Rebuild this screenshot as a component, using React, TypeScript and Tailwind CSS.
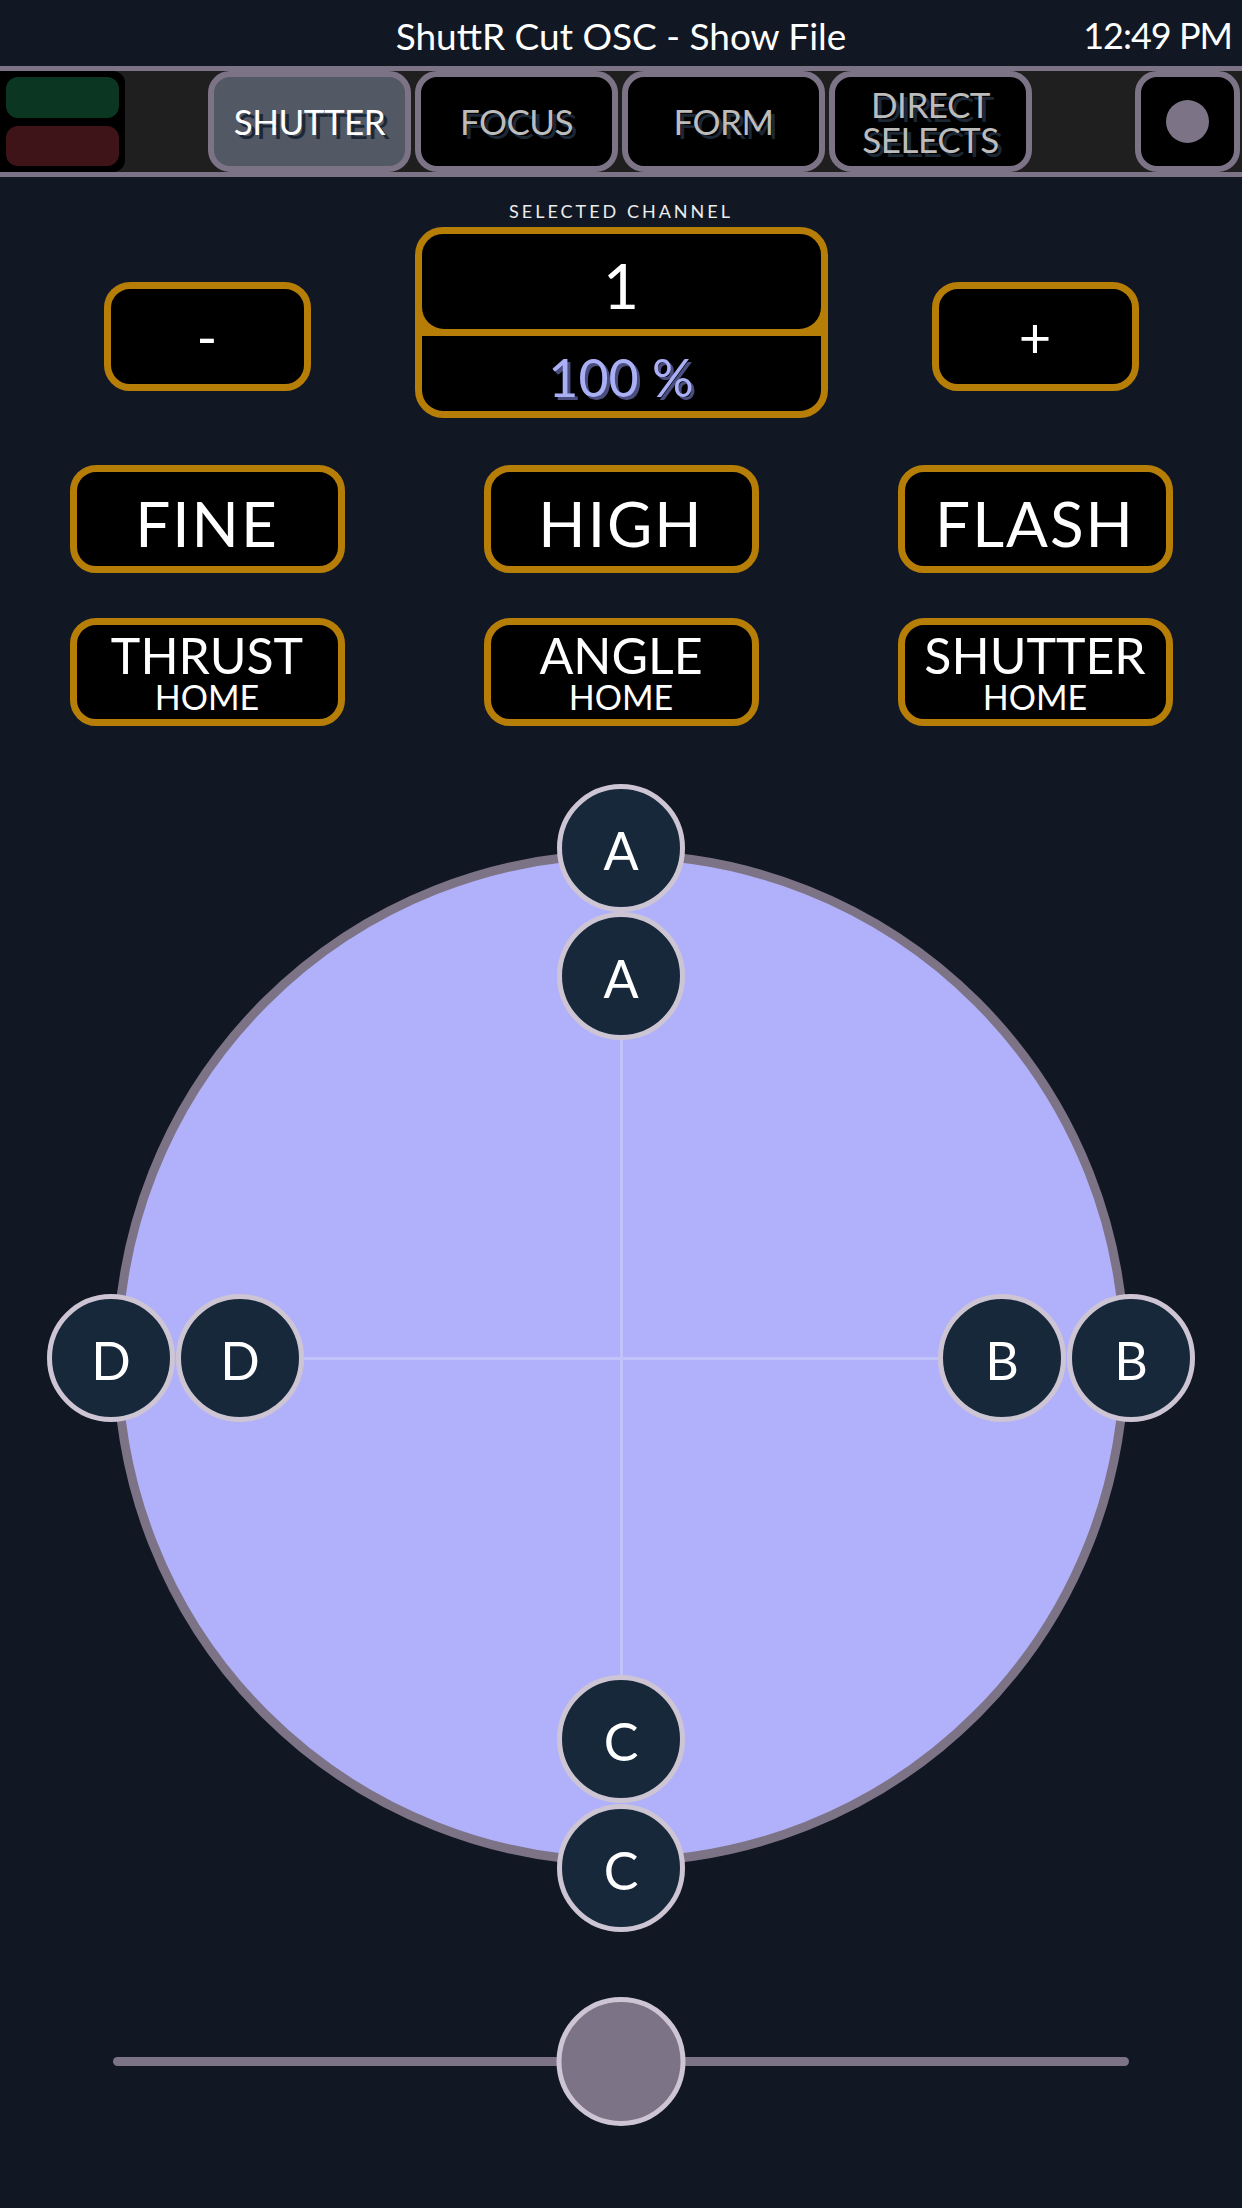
import React from 'react';

const handles = [
  { label: 'A', x: 499, y: -11 },
  { label: 'A', x: 499, y: 117 },
  { label: 'D', x: -11, y: 499 },
  { label: 'D', x: 118, y: 499 },
  { label: 'B', x: 880, y: 499 },
  { label: 'B', x: 1009, y: 499 },
  { label: 'C', x: 499, y: 880 },
  { label: 'C', x: 499, y: 1009 },
];

function Tab({ label, active }: { label: React.ReactNode; active?: boolean }) {
  return (
    <div
      className={`w-[203px] h-full rounded-[22px] border-[6px] border-[#7d7386] flex items-center justify-center text-center leading-[35px] text-[35px] tracking-[-0.5px] [text-shadow:4px_4px_0_#1c2836] ${
        active ? 'bg-[#525965] text-white' : 'bg-black text-[#bcbcbc]'
      }`}
    >
      {label}
    </div>
  );
}

function GoldButton({ top, bottom }: { top: string; bottom?: string }) {
  return (
    <div className="w-[275px] h-[108px] rounded-[26px] border-[7px] border-[#b67d07] bg-black flex flex-col items-center justify-center text-white">
      {bottom ? (
        <>
          <span className="text-[50px] leading-[50px]">{top}</span>
          <span className="text-[34px] leading-[34px]">{bottom}</span>
        </>
      ) : (
        <span className="text-[62px] leading-none tracking-[2px] pt-[8px]">{top}</span>
      )}
    </div>
  );
}

function StepButton({ sign }: { sign: string }) {
  return (
    <div className="mt-[81px] w-[207px] h-[109px] rounded-[26px] border-[7px] border-[#b67d07] bg-black flex items-center justify-center text-white text-[56px] leading-none">
      {sign}
    </div>
  );
}

export default function App() {
  return (
    <div className="min-h-screen bg-[#111824] text-white font-['Lato','Noto_Sans',sans-serif]">
      {/* Title bar */}
      <header className="h-[66px] grid grid-cols-[1fr_auto_1fr] items-center px-[10px]">
        <div />
        <h1 className="text-[37px] leading-none pt-[4px]">ShuttR Cut OSC - Show File</h1>
        <div className="justify-self-end text-[36px] leading-none pt-[4px] tracking-[-1px]">12:49 PM</div>
      </header>

      {/* Tab bar */}
      <nav className="h-[111px] border-y-[5px] border-[#7d7386] bg-[#1f1f1f] flex">
        <div className="w-[125px] h-full bg-black rounded-r-[12px] flex flex-col gap-[8px] p-[6px]">
          <div className="flex-1 rounded-[12px] bg-[#0a3622]" />
          <div className="flex-1 rounded-[12px] bg-[#3e1418]" />
        </div>
        <div className="ml-[83px] flex gap-[4px] h-full">
          <Tab label="SHUTTER" active />
          <Tab label="FOCUS" />
          <Tab label="FORM" />
          <Tab
            label={
              <span className="flex flex-col">
                <span>DIRECT</span>
                <span>SELECTS</span>
              </span>
            }
          />
        </div>
        <div className="ml-auto mr-[2px] w-[105px] h-full rounded-[22px] border-[6px] border-[#7d7386] bg-black flex items-center justify-center">
          <div className="w-[43px] h-[43px] rounded-full bg-[#7d7386]" />
        </div>
      </nav>

      {/* Channel controls */}
      <section className="grid grid-cols-3 justify-items-center items-start pt-[24px]">
        <StepButton sign="-" />
        <div className="flex flex-col items-center">
          <div className="text-[18px] leading-[20px] tracking-[3px] text-[#ececec]">SELECTED CHANNEL</div>
          <div className="mt-[6px] w-[413px] h-[191px] rounded-[28px] border-[7px] border-[#b67d07] bg-black overflow-hidden flex flex-col">
            <div className="bg-[#b67d07] pb-[7px]">
              <div className="h-[95px] bg-black rounded-b-[22px] flex items-center justify-center text-[62px] leading-none pt-[6px]">
                1
              </div>
            </div>
            <div className="flex-1 flex items-center justify-center text-[52px] leading-none text-[#aab0f6] [text-shadow:3px_3px_0_#4b4d7e] pt-[6px]">
              100 %
            </div>
          </div>
        </div>
        <StepButton sign="+" />
      </section>

      <section className="grid grid-cols-3 justify-items-center mt-[47px]">
        <GoldButton top="FINE" />
        <GoldButton top="HIGH" />
        <GoldButton top="FLASH" />
      </section>

      <section className="grid grid-cols-3 justify-items-center mt-[45px]">
        <GoldButton top="THRUST" bottom="HOME" />
        <GoldButton top="ANGLE" bottom="HOME" />
        <GoldButton top="SHUTTER" bottom="HOME" />
      </section>

      {/* Shutter joystick */}
      <div className="mt-[124px] mx-auto relative w-[1016px] h-[1016px] rounded-full border-[9px] border-[#7d7386] bg-[#b1b1fb]">
        <div className="absolute left-[498px] top-[181px] w-[3px] h-[635px] bg-[#c3c3fc]" />
        <div className="absolute top-[498px] left-[182px] h-[3px] w-[634px] bg-[#c3c3fc]" />
        {handles.map((h, i) => (
          <div
            key={i}
            className="absolute w-[128px] h-[128px] rounded-full bg-[#17283a] border-[5px] border-[#cdc5d3] flex items-center justify-center text-[52px] leading-none text-white pt-[4px]"
            style={{ left: h.x - 64, top: h.y - 64 }}
          >
            {h.label}
          </div>
        ))}
      </div>

      {/* Slider */}
      <div className="mt-[131px] h-[129px] px-[113px] flex items-center relative">
        <div className="w-full h-[9px] rounded-full bg-[#7d7386]" />
        <div className="absolute left-1/2 -translate-x-1/2 w-[129px] h-[129px] rounded-full bg-[#7d7386] border-[5px] border-[#cdc5d3]" />
      </div>
    </div>
  );
}
